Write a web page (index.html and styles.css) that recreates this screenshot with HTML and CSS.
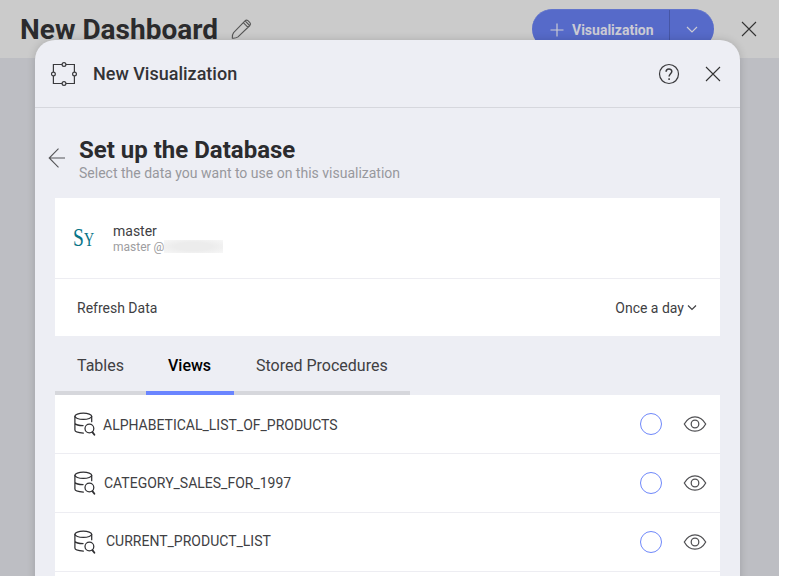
FILE: index.html
```html
<!DOCTYPE html>
<html lang="en">
<head>
<meta charset="utf-8">
<title>New Dashboard</title>
<link rel="stylesheet" href="styles.css">
</head>
<body>
<svg class="defs" width="0" height="0">
  <symbol id="database" viewBox="0 0 24 26"><g fill="none" stroke="#303033" stroke-width="1.25" stroke-linecap="round"><ellipse cx="10.300" cy="5.300" rx="8.400" ry="3.100"/><path d="M1.900 5.300V19.100c0 1.800 3.500 2.800 8.500 3M18.700 5.300v5.400M1.900 12.500c1.200 1.500 4 2 8.200 2.100"/><circle cx="16.400" cy="17.500" r="4.400"/><path d="M19.400 21.100l2 2.700" stroke-width="1.800"/></g></symbol>
  <symbol id="eye" viewBox="0 0 24 18"><g fill="none" stroke="#505053" stroke-width="1.25"><path d="M1.3 9C3.4 5.2 7.3 1.8 12 1.8S20.600 5.200 22.700 9C20.600 12.800 16.700 16.200 12 16.200S3.400 12.800 1.300 9z"/><circle cx="12" cy="9" r="3.8"/></g></symbol>
</svg>
<main class="app">
  <header class="topbar">
    <h1 class="dash-title">New Dashboard</h1>
    <svg class="pencil" width="22" height="22" viewBox="0 0 22 22" fill="none" stroke="#555" stroke-width="1.1" stroke-linejoin="round"><path d="M1.300 20.200q-.300-3.500 1.300-5.600L14 2.900q1.400-1.500 2.900-.200l2 2q1.300 1.400 0 2.800L7 18.900q-2.200 1.500-5.700 1.300zM12.300 4.700l4.700 4.700M14.300 3.200l4.300 4.300"/></svg>
    <div class="add-button">
      <span class="add-main"><svg width="14" height="14" viewBox="0 0 14 14" stroke="#cbcbd4" stroke-width="1.2"><path d="M7 .5v13M.5 7h13"/></svg><span class="add-label">Visualization</span></span>
      <span class="add-more"><svg width="12" height="8" viewBox="0 0 12 8" fill="none" stroke="#cbcbd4" stroke-width="1.2"><path d="M1 1l5 5 5-5"/></svg></span>
    </div>
    <svg class="close-dash" width="16" height="16" viewBox="0 0 16 16" stroke="#333" stroke-width="1.1"><path d="M1 1l14 14M15 1L1 15"/></svg>
  </header>
  <section class="modal">
    <header class="modal-head">
      <svg width="26" height="24" viewBox="0 0 26 24" fill="#edeef4" stroke="#3a3a3d" stroke-width="1.2"><path d="M2.400 2.500h21v19h-21z"/><circle cx="13" cy="2.500" r="1.900"/><circle cx="13" cy="21.500" r="1.900"/><circle cx="2.400" cy="12" r="1.900"/><circle cx="23.500" cy="12" r="1.900"/></svg>
      <h2 class="modal-title">New Visualization</h2>
      <svg class="help" width="22" height="22" viewBox="0 0 22 22" fill="none" stroke="#3a3a3d" stroke-width="1.2"><circle cx="11" cy="11" r="9.500"/><path stroke-width="1.500" d="M8.100 8.800c0-3.600 5.700-3.600 5.700-.200 0 2-2.700 2.500-2.700 4.900M11.100 15.200v1.700"/></svg>
      <svg width="16" height="16" viewBox="0 0 16 16" stroke="#333" stroke-width="1.100"><path d="M1 1l14 14M15 1L1 15"/></svg>
    </header>
    <div class="intro">
      <svg class="back" width="18" height="20" viewBox="0 0 18 20" fill="none" stroke="#555558" stroke-width="1.100"><path d="M10.500 .7L1.200 10l9.300 9.300M1.200 10H17"/></svg>
      <div>
        <h3 class="intro-title">Set up the Database</h3>
        <p class="intro-sub">Select the data you want to use on this visualization</p>
      </div>
    </div>
    <div class="card">
      <div class="source">
        <span class="logo"><span class="logo-s">S</span><span class="logo-y">Y</span></span>
        <div>
          <div class="source-name">master</div>
          <div class="source-host">master @<span class="redacted"></span></div>
        </div>
      </div>
      <div class="refresh">
        <span class="refresh-label">Refresh Data</span>
        <span class="refresh-value">Once a day</span>
        <svg width="10" height="8" viewBox="0 0 10 8" fill="none" stroke="#404043" stroke-width="1.200"><path d="M1 1.500l4 4 4-4"/></svg>
      </div>
    </div>
    <nav class="tabs">
      <span class="tab tab-tables">Tables</span>
      <span class="tab tab-active">Views</span>
      <span class="tab tab-stored">Stored Procedures</span>
    </nav>
    <div class="list">
      <div class="row"><svg width="24" height="26"><use href="#database"/></svg><span class="name name-a">ALPHABETICAL_LIST_OF_PRODUCTS</span><i class="radio"></i><svg width="24" height="18"><use href="#eye"/></svg></div>
      <div class="row"><svg width="24" height="26"><use href="#database"/></svg><span class="name name-b">CATEGORY_SALES_FOR_1997</span><i class="radio"></i><svg width="24" height="18"><use href="#eye"/></svg></div>
      <div class="row"><svg width="24" height="26"><use href="#database"/></svg><span class="name name-c">CURRENT_PRODUCT_LIST</span><i class="radio"></i><svg width="24" height="18"><use href="#eye"/></svg></div>
      <div class="row"></div>
    </div>
  </section>
</main>
</body>
</html>
```

FILE: styles.css
```css
* { box-sizing: border-box; }
html, body { margin: 0; height: 100%; overflow: hidden; background: #fff; }
body { font-family: Roboto, "Liberation Sans", sans-serif; color: #404043; }
h1, h2, h3, p { margin: 0; }
svg { display: block; flex: none; }
.defs { position: absolute; }
.app { position: relative; width: 779px; height: 576px; background: #bdbec3; overflow: hidden; }

.topbar { display: flex; align-items: center; height: 58px; padding: 0 22px 0 20px; background: #cbcbcb; }
.dash-title { padding-top: 2px; font-size: 28px; line-height: 58px; font-weight: 700; color: #2b2b2d; white-space: nowrap; width: 211px; }
.add-button { display: flex; width: 182px; height: 40px; margin: 0 27px 0 auto; border-radius: 20px; background: #566ac9; border-top: 1px solid #6275cc; overflow: hidden; }
.add-main { display: flex; align-items: center; width: 138px; padding-left: 18px; gap: 8px; border-right: 1px solid #4656a5; }
.add-label { font-size: 14px; font-weight: 700; color: #cbcbd4; }
.add-more { display: flex; flex: 1; align-items: center; justify-content: center; }

.modal { position: absolute; left: 35px; top: 40px; width: 705px; height: 560px; border-radius: 20px 20px 0 0; background: #edeef4; box-shadow: 0 0 8px rgba(0, 0, 0, .16); }
.modal-head { display: flex; align-items: center; height: 68px; padding: 0 19px 0 16px; border-bottom: 1px solid #d6d7dd; }
.modal-title { margin-left: 16px; font-size: 18px; font-weight: 500; color: #333336; white-space: nowrap; }
.help { margin: 0 25px 0 auto; }

.intro { display: flex; height: 90px; padding: 28px 0 0 13px; }
.back { margin: 12px 13px 0 0; }
.intro-title { font-size: 24px; line-height: 28px; font-weight: 700; color: #2b2b2e; white-space: nowrap; }
.intro-sub { font-size: 14px; line-height: 18px; color: #97989d; white-space: nowrap; }

.card { width: 665px; height: 138px; margin-left: 20px; background: #fff; }
.source { display: flex; align-items: center; height: 81px; padding-left: 18px; border-bottom: 1px solid #ededf2; }
.logo { display: flex; align-items: baseline; width: 40px; padding-top: 2px; font: 25px/26px "Liberation Serif", serif; color: #087487; }
.logo-s { width: 11px; transform: scaleX(.78); transform-origin: left; }
.logo-y { font-size: 19px; transform: scaleX(.74); transform-origin: left; }
.source-name { font-size: 14px; line-height: 17px; }
.source-host { display: flex; align-items: center; font-size: 12px; line-height: 14px; color: #9d9da0; }
.redacted { width: 59px; height: 13px; background: radial-gradient(ellipse at center, #ececec 45%, #f7f7f7 100%); }
.refresh { display: flex; align-items: center; height: 57px; padding: 0 23px 0 22px; font-size: 14px; }
.refresh-value { margin-left: auto; margin-right: 3px; }

.tabs { display: flex; width: 355px; height: 59px; margin-left: 20px; font-size: 16px; }
.tab { display: flex; align-items: center; border-bottom: 4px solid #d6d7dc; padding-top: 4px; white-space: nowrap; }
.tab-tables { width: 91px; padding-left: 22px; }
.tab-active { width: 88px; padding-left: 22px; border-color: #6a85ff; font-weight: 500; color: #000; }
.tab-stored { flex: 1; padding-left: 22px; }

.list { width: 665px; margin-left: 20px; background: #fff; }
.row { display: flex; align-items: center; height: 59px; padding: 0 13px 0 18px; border-bottom: 1px solid #ededf2; }
.name { font-size: 14px; white-space: nowrap; }
.name-a { margin-left: 6px; padding-top: 2px; }
.name-b { margin-left: 7px; }
.name-c { margin-left: 9px; padding-bottom: 2px; }
.radio { width: 22px; height: 22px; margin: 0 21px 0 auto; border: 1.500px solid #6f88fa; border-radius: 50%; }
```
